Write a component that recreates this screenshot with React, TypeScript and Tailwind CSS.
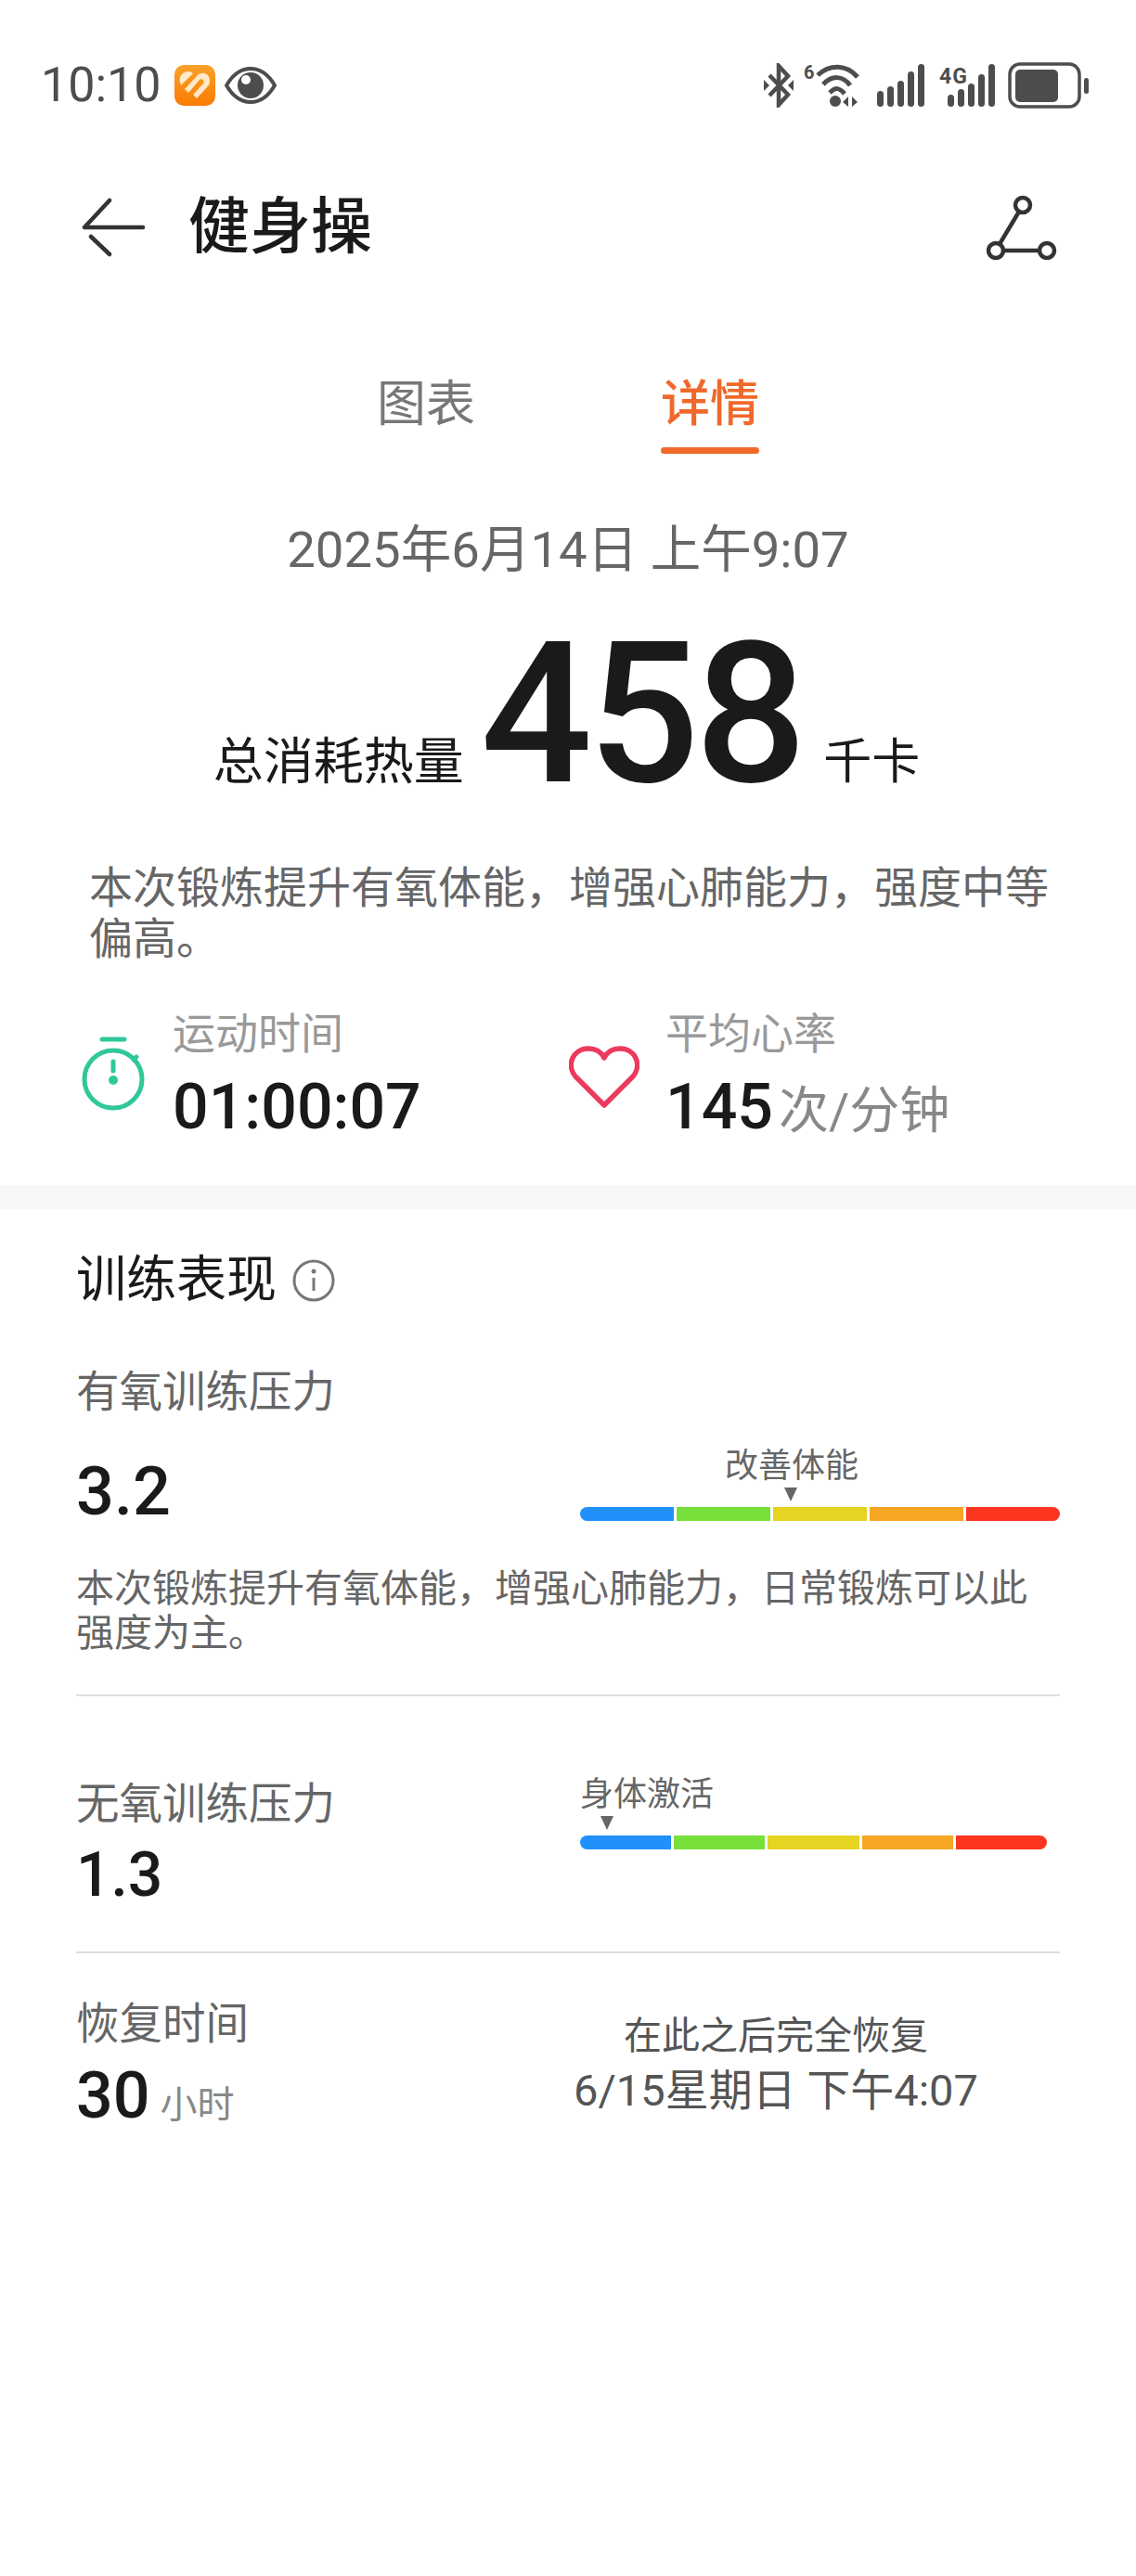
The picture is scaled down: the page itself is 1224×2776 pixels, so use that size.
const font = "font-['Roboto','Noto_Sans_CJK_SC',sans-serif]";

function Bar({ widthClass }: { widthClass: string }) {
  return (
    <div className={`flex h-[15px] gap-[3px] overflow-hidden rounded-full ${widthClass}`}>
      <div className="flex-1 bg-[#2190fb]" />
      <div className="flex-1 bg-[#77e03a]" />
      <div className="flex-1 bg-[#e6d322]" />
      <div className="flex-1 bg-[#f6a623]" />
      <div className="flex-1 bg-[#fb3520]" />
    </div>
  );
}

function Tri() {
  return (
    <svg width="14" height="15" viewBox="0 0 14 15" className="block">
      <path d="M0 0H14L7 15Z" fill="#666" />
    </svg>
  );
}

export default function App() {
  return (
    <div className={`${font} h-[2776px] w-[1224px] overflow-hidden bg-white text-[#1a1a1a]`}>
      {/* status bar */}
      <div className="flex h-[210px] items-start justify-between pl-[44px] pr-[50px] pt-[61px] text-[#4d4d4d]">
        <div className="flex h-[62px] items-center">
          <span className="text-[52px] leading-[62px]">10:10</span>
          <svg width="44" height="44" viewBox="0 0 44 44" className="ml-[14px]">
            <defs>
              <linearGradient id="g" x1="0" y1="0" x2="0" y2="1">
                <stop offset="0" stopColor="#fba129" />
                <stop offset="1" stopColor="#f97c03" />
              </linearGradient>
            </defs>
            <rect width="44" height="44" rx="10" fill="url(#g)" />
            <path d="M6 19C4 12 9 7 15 7C17 7 19 8 20 9L7 22Z" fill="#ffe9c9" />
            <path d="M11 26L24 12C29 6 38 9 38 17C38 20 37 22 35 24L24 36L20 32L31 20C33 17 29 14 27 16L15 30Z" fill="#ffe9c9" />
          </svg>
          <svg width="56" height="44" viewBox="0 0 56 44" className="ml-[10px]">
            <path d="M2 22C9 10 18 4 28 4C38 4 47 10 54 22C47 34 38 40 28 40C18 40 9 34 2 22Z" fill="none" stroke="#4d4d4d" strokeWidth="4" />
            <circle cx="28" cy="22" r="14" fill="#4d4d4d" />
            <circle cx="23" cy="16" r="5" fill="#fff" />
          </svg>
        </div>
        <div className="flex h-[62px] items-center">
          <svg width="32" height="48" viewBox="0 0 32 48" fill="none" stroke="#4d4d4d" strokeWidth="4.5">
            <path d="M6 13L26 34L16 45V3L26 14L6 35" />
            <path d="M0 18L6 24L0 30ZM32 18L26 24L32 30Z" fill="#4d4d4d" stroke="none" />
          </svg>
          <svg width="62" height="50" viewBox="0 0 62 50" className="ml-[11px]">
            <text x="0" y="18" fontSize="20" fontWeight="700" fill="#4d4d4d" fontFamily="Roboto">6</text>
            <path d="M15 14C28 2 46 2 58 16M21 24C30 14 42 14 50 25M28 33C34 27 38 27 44 34" fill="none" stroke="#4d4d4d" strokeWidth="5" />
            <circle cx="34" cy="42" r="6" fill="#4d4d4d" />
            <path d="M48 37V48L42 43ZM52 37V48L58 43Z" fill="#4d4d4d" />
          </svg>
          <svg width="52" height="48" viewBox="0 0 52 48" className="ml-[17px]" fill="#4d4d4d">
            <rect x="0" y="30" width="7" height="17" rx="3.5" />
            <rect x="11" y="25" width="7" height="22" rx="3.5" />
            <rect x="22" y="19" width="7" height="28" rx="3.5" />
            <rect x="33" y="9" width="7" height="38" rx="3.5" />
            <rect x="44" y="1" width="7" height="46" rx="3.5" />
          </svg>
          <svg width="62" height="48" viewBox="0 0 62 48" className="ml-[15px]" fill="#4d4d4d">
            <text x="0" y="22" fontSize="23" fontWeight="700" fontFamily="Roboto" textLength="30">4G</text>
            <rect x="9" y="34" width="7" height="13" rx="3.5" />
            <rect x="20" y="28" width="7" height="19" rx="3.5" />
            <rect x="31" y="22" width="7" height="25" rx="3.5" />
            <rect x="42" y="12" width="7" height="35" rx="3.5" />
            <rect x="53" y="1" width="7" height="46" rx="3.5" />
          </svg>
          <svg width="88" height="50" viewBox="0 0 88 50" className="ml-[12px]">
            <rect x="2" y="2" width="75" height="46" rx="11" fill="none" stroke="#4d4d4d" strokeWidth="3.5" />
            <rect x="8" y="8" width="46" height="35" rx="5" fill="#4d4d4d" />
            <rect x="82" y="17" width="5" height="17" rx="2.5" fill="#4d4d4d" />
          </svg>
        </div>
      </div>

      {/* app bar */}
      <div className="flex h-[70px] items-center justify-between pl-[88px] pr-[85px]">
        <div className="flex items-center">
          <svg width="68" height="64" viewBox="0 0 68 64" fill="none" stroke="#333" strokeWidth="4.5" strokeLinecap="round" strokeLinejoin="round">
            <path d="M30 3L3 32H66M10 42L30 61" />
          </svg>
          <span className="ml-[47px] text-[66px] font-medium leading-[70px] text-[#1a1a1a]">健身操</span>
        </div>
        <svg width="76" height="70" viewBox="0 0 76 70" fill="none" stroke="#333" strokeWidth="4.5">
          <circle cx="39" cy="11" r="8" />
          <circle cx="10" cy="60" r="8" />
          <circle cx="65" cy="60" r="8" />
          <path d="M35 18L14 53M18 60H57" />
        </svg>
      </div>

      {/* tabs */}
      <div className="mt-[122px] flex justify-center gap-[200px]">
        <div className="h-[87px] text-[53px] leading-[68px] text-[#777]">图表</div>
        <div className="flex h-[87px] flex-col justify-between text-[53px] font-medium leading-[68px] text-[#f0692a]">
          <span>详情</span>
          <div className="h-[7px] rounded-full bg-[#f0692a]" />
        </div>
      </div>

      {/* date */}
      <div className="mt-[68px] text-center text-[54.5px] leading-[70px] text-[#666]">2025年6月14日 上午9:07</div>

      {/* calories */}
      <div className="mt-[48px] flex h-[190px] items-end justify-center pr-[3px]">
        <span className="pb-[8px] text-[54px] leading-[70px]">总消耗热量</span>
        <span className="ml-[18px] text-[212px] font-medium leading-[190px] tracking-[-5px]">458</span>
        <span className="ml-[23px] pb-[8px] text-[52px] leading-[70px]">千卡</span>
      </div>

      <p className="mt-[64px] pl-[96px] pr-[90px] text-[47px] leading-[55px] text-[#666]">本次锻炼提升有氧体能，增强心肺能力，强度中等偏高。</p>

      {/* metrics */}
      <div className="mt-[45px] flex pl-[88px]">
        <div className="flex w-[527px]">
          <svg width="68" height="82" viewBox="0 0 68 82" fill="none" stroke="#2fc89b" strokeWidth="5" className="mt-[32px]">
            <path d="M22 4H46" strokeLinecap="round" />
            <circle cx="34" cy="47" r="31" />
            <path d="M34 28V38" strokeLinecap="round" />
            <circle cx="34" cy="48" r="5" fill="#2fc89b" stroke="none" />
            <path d="M56 26L59 23" strokeLinecap="round" />
          </svg>
          <div className="ml-[30px]">
            <div className="text-[46px] leading-[60px] text-[#999]">运动时间</div>
            <div className="mt-[11px] text-[68px] font-medium leading-[76px]">01:00:07</div>
          </div>
        </div>
        <div className="flex">
          <svg width="76" height="70" viewBox="0 0 76 70" fill="none" stroke="#ec3a5e" strokeWidth="5.5" strokeLinejoin="round" className="-ml-[2px] mt-[42px]">
            <path d="M38 65L7 34C-3 22 4 4 21 4C29 4 35 8 38 14C41 8 47 4 55 4C72 4 79 22 69 34Z" />
          </svg>
          <div className="ml-[28px]">
            <div className="text-[46px] leading-[60px] text-[#999]">平均心率</div>
            <div className="mt-[11px] flex items-baseline leading-[76px]">
              <span className="text-[68px] font-medium">145</span>
              <span className="ml-[6px] text-[54px] text-[#888]">次/分钟</span>
            </div>
          </div>
        </div>
      </div>

      <div className="mt-[41px] h-[26px] bg-[#f7f7f7]" />

      {/* training */}
      <div className="px-[82px]">
        <div className="mt-[45px] flex h-[64px] items-center">
          <span className="text-[54px] leading-[64px]">训练表现</span>
          <svg width="46" height="46" viewBox="0 0 46 46" fill="none" stroke="#777" strokeWidth="3" className="ml-[17px]">
            <circle cx="23" cy="23" r="21" />
            <path d="M23 20V34" />
            <circle cx="23" cy="13" r="2.5" fill="#777" stroke="none" />
          </svg>
        </div>

        <div className="mt-[58px] text-[46.5px] leading-[60px] text-[#666]">有氧训练压力</div>
        <div className="mt-[30px] flex items-start justify-between">
          <div className="mt-[6px] text-[72px] font-medium leading-[84px]">3.2</div>
          <div className="w-[517px]">
            <div className="pl-[156px] text-[36px] leading-[41px] text-[#666]">改善体能</div>
            <div className="pl-[220px]"><div className="mt-[2px]"><Tri /></div></div>
            <div className="mt-[6px]"><Bar widthClass="w-[517px]" /></div>
          </div>
        </div>
        <p className="mt-[38px] text-[41px] leading-[48px] text-[#666]">本次锻炼提升有氧体能，增强心肺能力，日常锻炼可以此强度为主。</p>
        <div className="mt-[42px] h-[2px] bg-[#ddd]" />

        <div className="mt-[86px] flex items-start justify-between">
          <div>
            <div className="text-[46.5px] leading-[60px] text-[#666]">无氧训练压力</div>
            <div className="mt-[5px] text-[66px] font-medium leading-[84px]">1.3</div>
          </div>
          <div className="w-[517px]">
            <div className="text-[36px] leading-[41px] text-[#666]">身体激活</div>
            <div className="pl-[22px]"><div className="mt-[2px]"><Tri /></div></div>
            <div className="mt-[6px]"><Bar widthClass="w-[503px]" /></div>
          </div>
        </div>
        <div className="mt-[40px] h-[2px] bg-[#ddd]" />

        <div className="mt-[46px] flex items-start">
          <div className="w-[534px]">
            <div className="text-[46.5px] leading-[60px] text-[#666]">恢复时间</div>
            <div className="mt-[5px] flex items-baseline">
              <span className="text-[70px] font-medium leading-[84px]">30</span>
              <span className="ml-[11px] text-[40px] text-[#888]">小时</span>
            </div>
          </div>
          <div className="w-[440px] text-center text-[#555]">
            <div className="mt-[15px] text-[41px] leading-[56px]">在此之后完全恢复</div>
            <div className="mt-[2px] whitespace-nowrap text-[47px] leading-[58px]">6/15星期日 下午4:07</div>
          </div>
        </div>
      </div>
    </div>
  );
}
